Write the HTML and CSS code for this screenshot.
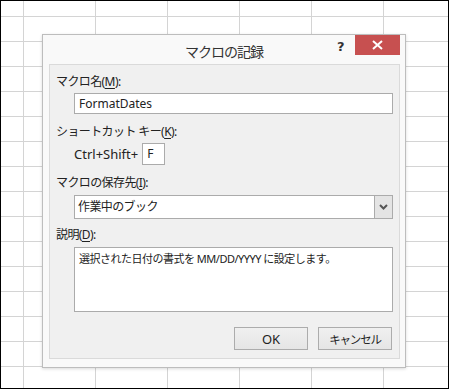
FILE: index.html
```html
<!DOCTYPE html>
<html lang="ja">
<head>
  <meta charset="UTF-8">
  <title>マクロの記録</title>
  <link rel="stylesheet" href="styles.css">
</head>
<body>
  <div class="sheet">
    <div class="dialog">
      <div class="titlebar">
        <span class="title">マクロの記録</span>
        <span class="help">?</span>
        <span class="close">
          <svg width="11" height="10" viewBox="0 0 11 10"><path d="M1 1 L10 9 M10 1 L1 9" stroke="#fff" stroke-width="2"/></svg>
        </span>
      </div>

      <div class="panel">
        <div class="label">マクロ名(<u>M</u>):</div>
        <div class="field input">FormatDates</div>

        <div class="label gap">ショートカット キー(<u>K</u>):</div>
        <div class="shortcut">
          <span>Ctrl+Shift+</span>
          <span class="keybox">F</span>
        </div>

        <div class="label gap">マクロの保存先(<u>I</u>):</div>
        <div class="field select">
          <span class="select-text">作業中のブック</span>
          <span class="drop">
            <svg width="9" height="6" viewBox="0 0 9 6"><path d="M1 1 L4.5 4.5 L8 1" fill="none" stroke="#555" stroke-width="2"/></svg>
          </span>
        </div>

        <div class="label gap-small">説明(<u>D</u>):</div>
        <div class="field textarea">選択された日付の書式を MM/DD/YYYY に設定します。</div>

        <div class="buttons">
          <button class="btn">OK</button>
          <button class="btn btn-kana">キャンセル</button>
        </div>
      </div>
    </div>
  </div>
</body>
</html>
```

FILE: styles.css
```css
html, body {
  margin: 0;
  padding: 0;
}

body {
  font-family: "Noto Sans", "Noto Sans CJK JP", sans-serif;
  font-size: 12px;
  color: #222;
}

.sheet {
  position: relative;
  box-sizing: border-box;
  width: 449px;
  height: 389px;
  border: 1px solid #000;
  background-color: #fff;
  background-image:
    linear-gradient(to right, #d4d4d4 1px, transparent 1px),
    linear-gradient(to bottom, #d4d4d4 1px, transparent 1px);
  background-size: 72px 25px;
  background-position: 22px 15px;
}

.dialog {
  position: absolute;
  left: 41px;
  top: 33px;
  width: 362px;
  height: 332px;
  border: 1px solid #bdbdbd;
  background-color: #f9f9f9;
  box-shadow: 0 1px 3px rgba(0, 0, 0, 0.15);
}

.titlebar {
  position: relative;
  height: 29px;
  display: flex;
  justify-content: center;
  align-items: center;
}

.title {
  font-family: "Noto Sans CJK JP", sans-serif;
  font-size: 14px;
  letter-spacing: -1px;
  color: #333;
  margin-top: 2px;
}

.help {
  position: absolute;
  left: 294px;
  top: 4px;
  font-family: "DejaVu Sans", sans-serif;
  font-weight: bold;
  font-size: 13px;
  color: #333;
}

.close {
  position: absolute;
  left: 312px;
  top: 0;
  width: 45px;
  height: 20px;
  background-color: #c75050;
  display: flex;
  justify-content: center;
  align-items: center;
}

.panel {
  margin: 0 5px 0 6px;
  height: 295px;
  box-sizing: border-box;
  border: 1px solid #dadada;
  background-color: #f0f0f0;
  padding: 8px 6px 0 6px;
  display: flex;
  flex-direction: column;
}

.label {
  height: 18px;
  line-height: 18px;
  letter-spacing: -0.6px;
}

.label u {
  text-underline-offset: 2px;
}

.gap {
  margin-top: 9px;
}

.gap-small {
  margin-top: 7px;
}

.field {
  box-sizing: border-box;
  margin-left: 18px;
  border: 1px solid #ababab;
  background-color: #fff;
}

.input {
  margin-top: 2px;
  height: 21px;
  line-height: 19px;
  padding-left: 4px;
}

.shortcut {
  margin-top: 2px;
  margin-left: 18px;
  height: 22px;
  display: flex;
  align-items: center;
  gap: 4px;
  font-size: 13px;
}

.keybox {
  box-sizing: border-box;
  width: 23px;
  height: 22px;
  border: 1px solid #ababab;
  background-color: #fff;
  line-height: 20px;
  padding-left: 4px;
  font-size: 12px;
}

.select {
  margin-top: 3px;
  height: 24px;
  display: flex;
}

.select-text {
  flex: 1;
  line-height: 22px;
  padding-left: 3px;
  letter-spacing: -0.6px;
}

.drop {
  width: 17px;
  background-color: #e4e4e4;
  border-left: 1px solid #ababab;
  display: flex;
  justify-content: center;
  align-items: center;
}

.textarea {
  margin-top: 3px;
  height: 65px;
  padding: 2px 4px;
  line-height: 17px;
  font-size: 11px;
  letter-spacing: -0.5px;
}

.buttons {
  margin-top: 15px;
  display: flex;
  justify-content: flex-end;
  gap: 10px;
  padding-right: 1px;
}

.btn {
  box-sizing: border-box;
  width: 74px;
  height: 23px;
  border: 1px solid #acacac;
  background: linear-gradient(#f0f0f0, #e5e5e5);
  font-family: "Noto Sans", "Noto Sans CJK JP", sans-serif;
  font-size: 13px;
  color: #222;
  padding: 0;
}

.btn-kana {
  font-size: 11.5px;
  letter-spacing: -1.2px;
}
```
